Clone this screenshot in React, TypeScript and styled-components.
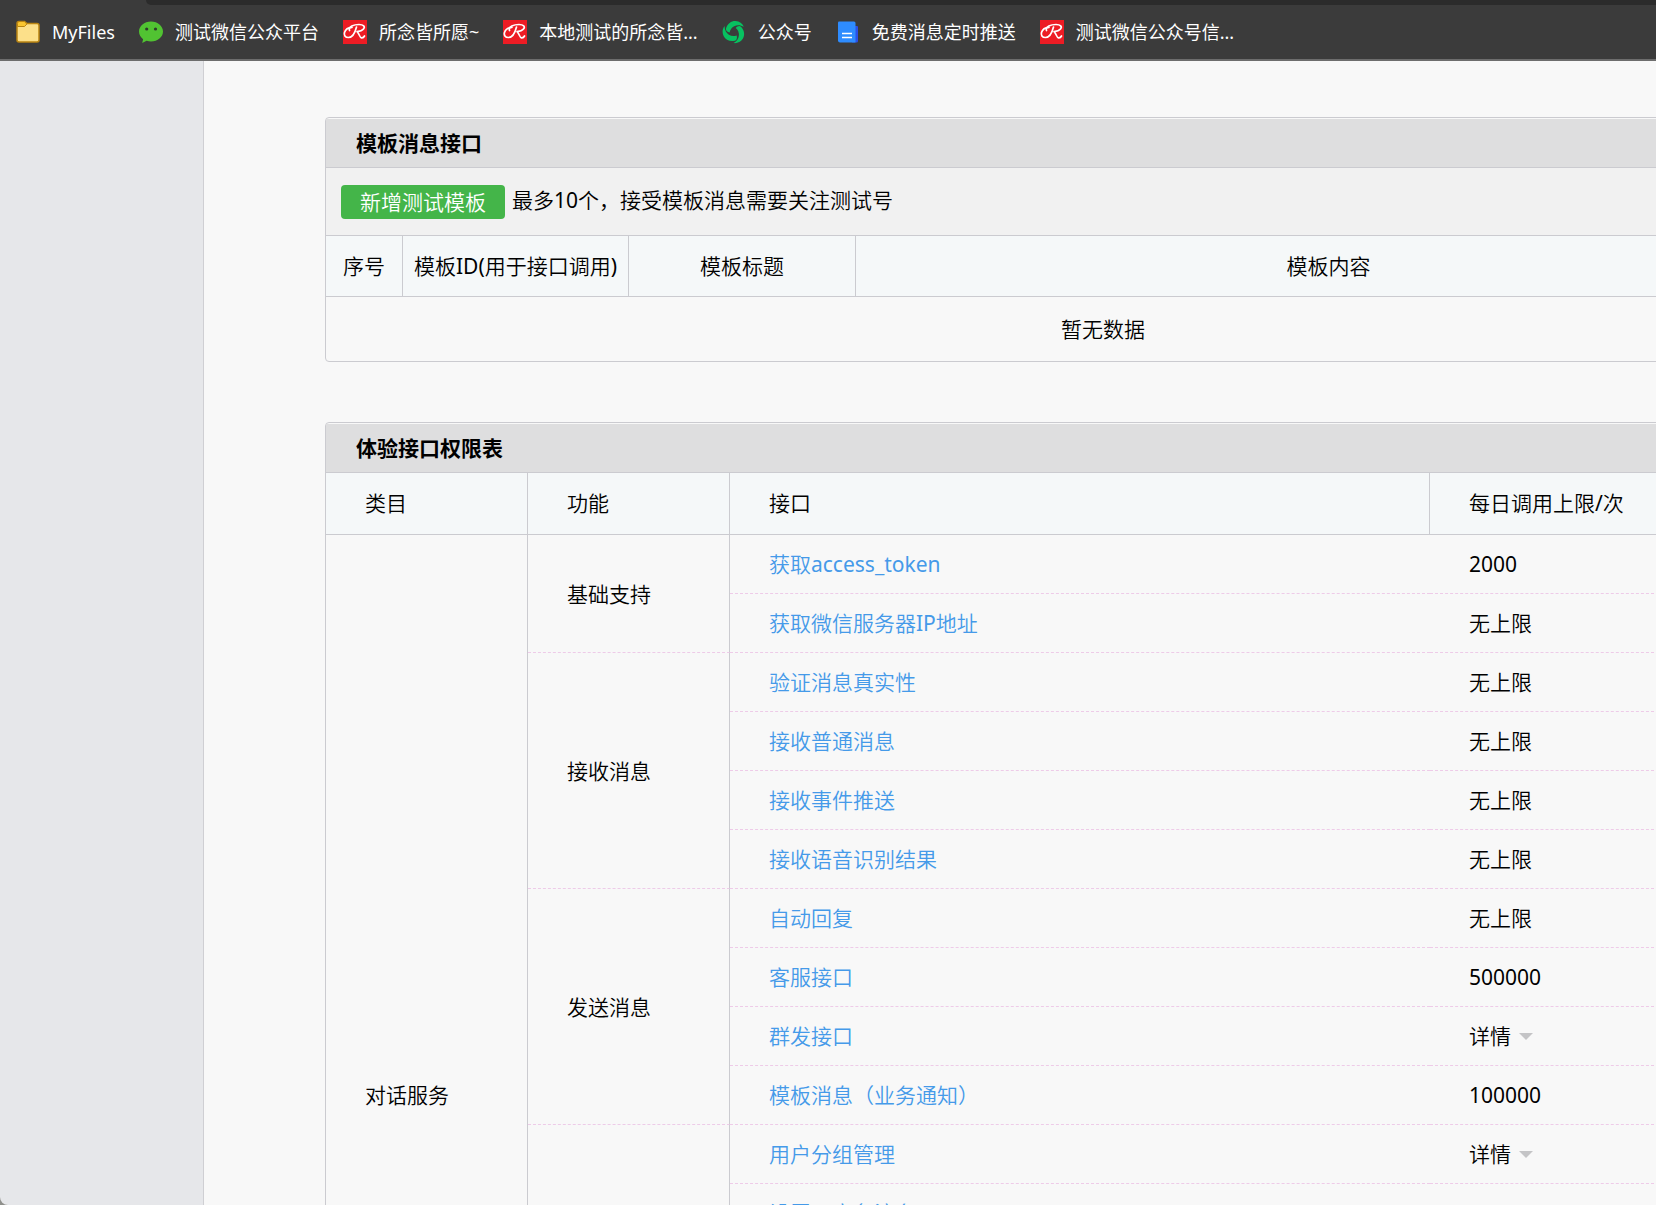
import React from "react";
import styled, { createGlobalStyle } from "styled-components";

const sans = `"Noto Sans", "Noto Sans CJK SC", sans-serif`;
const lightSans = `"Noto Sans", "Noto Sans CJK SC DemiLight", "Noto Sans CJK SC", sans-serif`;
const line = "#cbcbd0";

const GlobalStyle = createGlobalStyle`
  *, *::before, *::after { box-sizing: border-box; }
  body { margin: 0; background: #f8f8f8; color: #000; font: 21px/30px ${lightSans}; }
  button { font: inherit; color: inherit; border: 0; background: none; padding: 0; cursor: pointer; }
  h2 { margin: 0; }
`;

const Shell = styled.div`
  display: flex;
  flex-direction: column;
  height: 100vh;
  overflow: hidden;
`;

const TabStrip = styled.div`
  height: 5px;
  flex: none;
  margin-left: 146px;
  background: #2b2b2b;
  border-bottom-left-radius: 5px;
`;

const BrowserTop = styled.header`
  flex: none;
  background: #3b3b3b;
  border-bottom: 2px solid #6d6d6d;
`;

const Bookmarks = styled.nav`
  display: flex;
  align-items: center;
  gap: 24px;
  height: 54px;
  padding: 0 16px;
`;

const Bookmark = styled.a`
  display: flex;
  align-items: center;
  gap: 12px;
  flex: none;
  color: #fff;
  font-family: ${sans};
  font-size: 18px;
  line-height: 24px;
  white-space: nowrap;
  text-decoration: none;
  svg { display: block; flex: none; }
`;

const Body = styled.div`
  display: flex;
  flex: 1;
  min-height: 0;
`;

const Gutter = styled.div`
  flex: none;
  width: 204px;
  background: #8f908c;
`;

const Sidebar = styled.aside`
  height: 100%;
  background: #e6e7ea;
  border-right: 1px solid #cfcfd3;
  border-bottom-left-radius: 8px;
`;

const Main = styled.main`
  flex: 1;
  min-width: 0;
  overflow: auto;
  scrollbar-width: none;
  padding: 56px 0 0 121px;
`;

const Panel = styled.section`
  min-width: 1556px;
  margin-bottom: 60px;
  padding-top: 1px;
  border: 1px solid ${line};
  border-radius: 4px;
`;

const PanelTitle = styled.h2`
  height: 49px;
  padding: 9px 30px 0;
  background: #dededf;
  border-bottom: 1px solid ${line};
  font-family: ${sans};
  font-size: 21px;
  line-height: 30px;
  font-weight: 700;
`;

const Toolbar = styled.div`
  display: flex;
  align-items: flex-start;
  gap: 7px;
  height: 68px;
  padding: 17px 15px;
  background: #f1f1f1;
  border-bottom: 1px solid ${line};
`;

const AddButton = styled.button`
  height: 34px;
  padding: 0 19px;
  border-radius: 4px;
  background: #44b549;
  color: #fff;
`;

const Table = styled.table`
  width: 100%;
  table-layout: fixed;
  border-collapse: separate;
  border-spacing: 0;
`;

const Col = styled.col<{ $w?: number }>`
  width: ${(p) => (p.$w ? `${p.$w}px` : "auto")};
`;

const HeadCell = styled.th<{ $tall?: boolean }>`
  height: ${(p) => (p.$tall ? 62 : 61)}px;
  padding: ${(p) => (p.$tall ? "0 0 2px 39px" : "0")};
  text-align: ${(p) => (p.$tall ? "left" : "center")};
  font-weight: inherit;
  white-space: nowrap;
  background: #f5f8f9;
  border-right: 1px solid ${line};
  border-bottom: 1px solid ${line};
  &:last-child { border-right: 0; }
`;

const EmptyCell = styled.td`
  height: 64px;
  padding: 0;
  text-align: center;
`;

const Cell = styled.td<{ $side?: boolean }>`
  height: 59px;
  padding: 0 0 0 39px;
  white-space: nowrap;
  border-bottom: 1px dashed #eecbe8;
  border-right: ${(p) => (p.$side ? `1px solid ${line}` : "0")};
`;

const ApiLink = styled.a`
  color: #459ae9;
  text-decoration: none;
`;

const Detail = styled.button`
  display: flex;
  align-items: center;
  gap: 8px;
  &::after {
    content: "";
    border: solid transparent;
    border-width: 7px 7px 0;
    border-top-color: #c4c4c6;
  }
`;

const FolderIcon = () => (
  <svg width="24" height="24" viewBox="0 0 24 24" aria-hidden="true">
    <path d="M1 20V3.500Q1 1.500 3 1.500H8.500L11 3.500H21Q23 3.500 23 5.500V20Q23 22 21 22H3Q1 22 1 20Z" fill="#fce08a" stroke="#b98412" strokeWidth="1.500" />
    <path d="M1.500 6.500V3.500Q1.500 1.500 3 1.500H8.300L10.900 4L8.500 6.500Z" fill="#fac62f" stroke="#b98412" />
  </svg>
);

const WechatIcon = () => (
  <svg width="24" height="24" viewBox="0 0 24 24" aria-hidden="true">
    <path d="M12 1.500C5.300 1.500 0 6 0 11.600c0 3.200 1.600 5.800 4.100 7.600L3.200 23l4.400-2.200c1.400.5 2.900.8 4.400.8 6.700 0 12-4.500 12-10S18.700 1.500 12 1.500Z" fill="#51c332" />
    <circle cx="7.700" cy="9" r="1.600" fill="#2f3a2c" />
    <circle cx="16.500" cy="9" r="1.600" fill="#2f3a2c" />
  </svg>
);

const ScriptRIcon = () => (
  <svg width="24" height="24" viewBox="0 0 24 24" aria-hidden="true">
    <rect width="24" height="24" fill="#ed1c24" />
    <g fill="none" stroke="#fff" strokeLinecap="round" strokeLinejoin="round">
      <path d="M6.500 10.500C5 6.500 11 4.500 16 4.500C20.500 4.500 22.500 6.500 20.500 9C19 10.800 16.500 11.300 14 11.500C16 13 16.500 17.500 18.500 17.800C20 18 21 17 21.500 16" strokeWidth="1.700" />
      <path d="M13.500 7C12.500 11 10.500 17.500 5.500 17.500C2 17.500 .8 15 1.500 12.500C2.300 9.700 5 7.500 9 7.300" strokeWidth="1.700" />
    </g>
  </svg>
);

const SwirlIcon = () => (
  <svg width="24" height="24" viewBox="0 0 24 24" aria-hidden="true">
    <g fill="#07c160">
      {[0, 120, 240].map((a) => (
        <path
          key={a}
          transform={`rotate(${a} 12 12)`}
          d="M4 8.500C5.500 3.500 9.500 .8 13.500 1C17.500 1.200 20.500 3.500 21.800 6.800C18.500 4.700 14.800 4.800 12.200 6.200C9.800 7.400 8.200 9.500 7.600 12.500C5.300 12 3.600 10.500 4 8.500Z"
        />
      ))}
    </g>
  </svg>
);

const DocIcon = () => (
  <svg width="24" height="24" viewBox="0 0 24 24" aria-hidden="true">
    <path d="M18 6h3q1 0 1 1v14q0 1.500-1.500 1.500H16Z" fill="#2a50e8" />
    <path d="M3 1.500H18q1.500 0 1.500 1.500V22.500H4Q2 22.500 2 20.500V2.500Q2 1.500 3 1.500Z" fill="#2e8cff" />
    <path d="M6 13.500H16M6 17.500H16" stroke="#fff" strokeWidth="1.600" />
  </svg>
);

const bookmarks = [
  { icon: FolderIcon, name: "MyFiles" },
  { icon: WechatIcon, name: "测试微信公众平台" },
  { icon: ScriptRIcon, name: "所念皆所愿~" },
  { icon: ScriptRIcon, name: "本地测试的所念皆..." },
  { icon: SwirlIcon, name: "公众号" },
  { icon: DocIcon, name: "免费消息定时推送" },
  { icon: ScriptRIcon, name: "测试微信公众号信..." },
];

const DETAIL = "详情";
const NO_LIMIT = "无上限";

const groups: { name: string; apis: [string, string][] }[] = [
  { name: "基础支持", apis: [["获取access_token", "2000"], ["获取微信服务器IP地址", NO_LIMIT]] },
  {
    name: "接收消息",
    apis: [["验证消息真实性", NO_LIMIT], ["接收普通消息", NO_LIMIT], ["接收事件推送", NO_LIMIT], ["接收语音识别结果", NO_LIMIT]],
  },
  {
    name: "发送消息",
    apis: [["自动回复", NO_LIMIT], ["客服接口", "500000"], ["群发接口", DETAIL], ["模板消息（业务通知）", "100000"]],
  },
  {
    name: "用户管理",
    apis: [["用户分组管理", DETAIL], ["设置用户备注名", "10000"], ["获取用户基本信息", "500000"], ["获取用户列表", "500"], ["获取用户地理位置", NO_LIMIT]],
  },
  { name: "推广支持", apis: [["生成带参数二维码", "100000"], ["长链接转短链接接口", "1000"]] },
  { name: "界面丰富", apis: [["自定义菜单", DETAIL]] },
  { name: "素材管理", apis: [["素材管理接口", DETAIL]] },
];

const total = groups.reduce((n, g) => n + g.apis.length, 0);

export default function App() {
  return (
    <Shell>
      <GlobalStyle />
      <BrowserTop>
        <TabStrip />
        <Bookmarks>
          {bookmarks.map(({ icon: Icon, name }) => (
            <Bookmark href="#" key={name}>
              <Icon />
              {name}
            </Bookmark>
          ))}
        </Bookmarks>
      </BrowserTop>
      <Body>
        <Gutter>
          <Sidebar />
        </Gutter>
        <Main>
          <Panel>
            <PanelTitle>模板消息接口</PanelTitle>
            <Toolbar>
              <AddButton type="button">新增测试模板</AddButton>
              <span>最多10个，接受模板消息需要关注测试号</span>
            </Toolbar>
            <Table>
              <colgroup>
                <Col $w={77} />
                <Col $w={226} />
                <Col $w={227} />
                <Col />
                <Col $w={78} />
              </colgroup>
              <thead>
                <tr>
                  <HeadCell>序号</HeadCell>
                  <HeadCell>模板ID(用于接口调用)</HeadCell>
                  <HeadCell>模板标题</HeadCell>
                  <HeadCell>模板内容</HeadCell>
                  <HeadCell>操作</HeadCell>
                </tr>
              </thead>
              <tbody>
                <tr>
                  <EmptyCell colSpan={5}>暂无数据</EmptyCell>
                </tr>
              </tbody>
            </Table>
          </Panel>
          <Panel>
            <PanelTitle>体验接口权限表</PanelTitle>
            <Table>
              <colgroup>
                <Col $w={202} />
                <Col $w={202} />
                <Col $w={700} />
                <Col />
              </colgroup>
              <thead>
                <tr>
                  <HeadCell $tall>类目</HeadCell>
                  <HeadCell $tall>功能</HeadCell>
                  <HeadCell $tall>接口</HeadCell>
                  <HeadCell $tall>每日调用上限/次</HeadCell>
                </tr>
              </thead>
              <tbody>
                {groups.map((group, g) =>
                  group.apis.map(([api, limit], i) => (
                    <tr key={api}>
                      {g === 0 && i === 0 && (
                        <Cell $side rowSpan={total}>对话服务</Cell>
                      )}
                      {i === 0 && (
                        <Cell $side rowSpan={group.apis.length}>{group.name}</Cell>
                      )}
                      <Cell>
                        <ApiLink href="#">{api}</ApiLink>
                      </Cell>
                      <Cell>{limit === DETAIL ? <Detail type="button">{limit}</Detail> : limit}</Cell>
                    </tr>
                  ))
                )}
              </tbody>
            </Table>
          </Panel>
        </Main>
      </Body>
    </Shell>
  );
}
